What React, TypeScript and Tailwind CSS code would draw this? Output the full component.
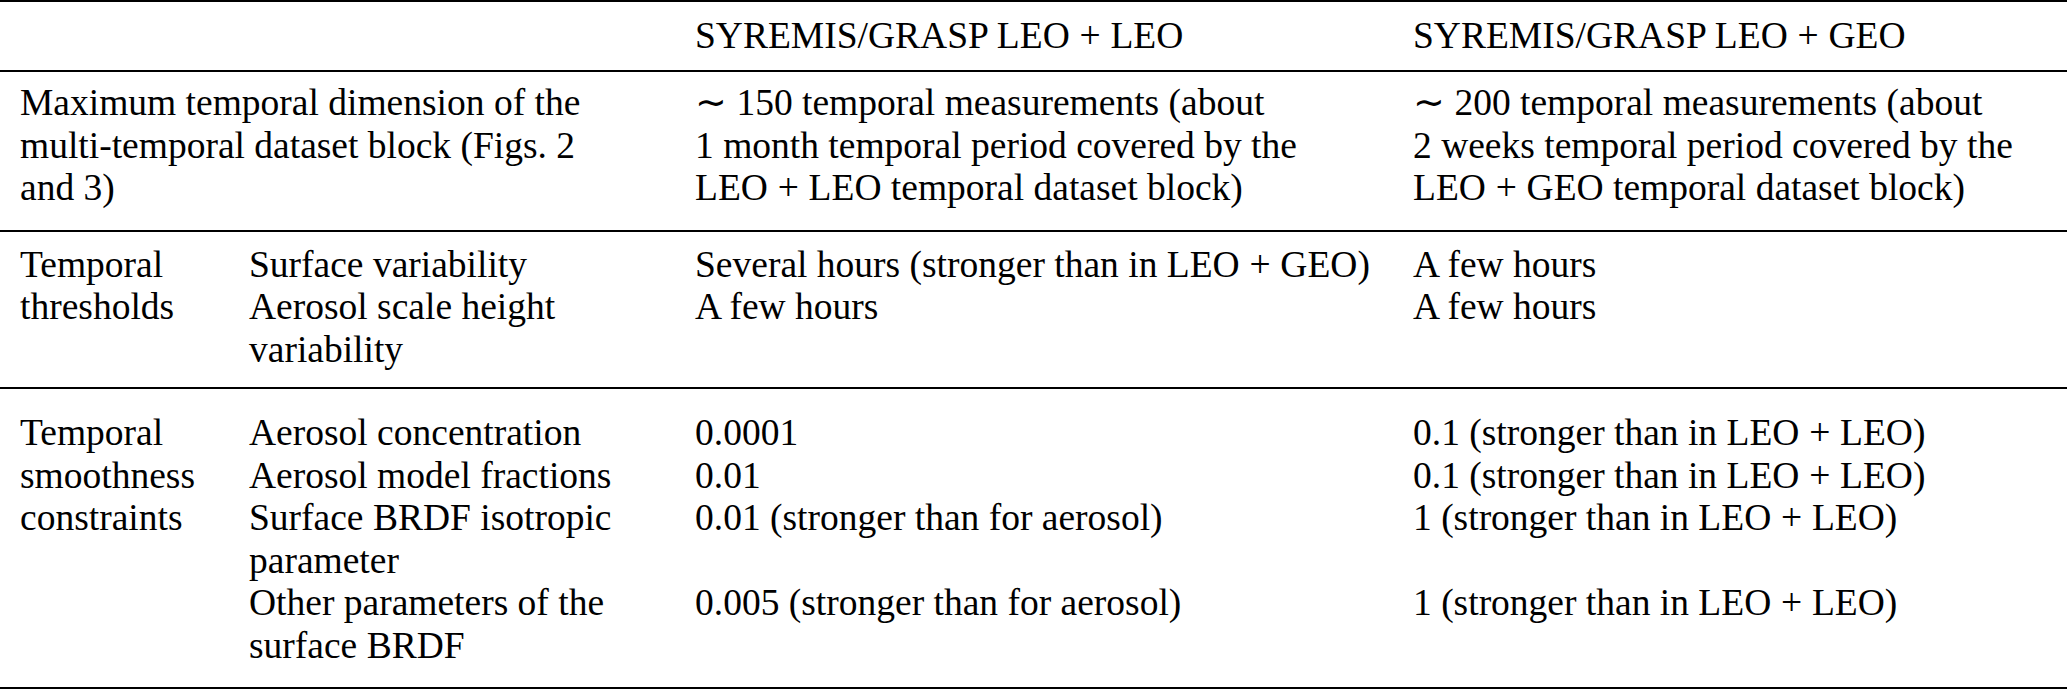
import React from "react"

const Plus = () => <span className="mx-[0.26em]">+</span>

const L = ({ lines }: { lines: React.ReactNode[] }) => (
  <>
    {lines.map((l, i) => (
      <div key={i} className="whitespace-nowrap">
        {l}
      </div>
    ))}
  </>
)

export default function App() {
  return (
    <div className="h-[690px] w-[2067px] bg-white font-['Liberation_Serif',serif] text-[37.5px] leading-[42.5px] text-black">
      <table className="w-full table-fixed border-collapse border-t-2 border-black">
        <colgroup>
          <col className="w-[249px]" />
          <col className="w-[446px]" />
          <col className="w-[718px]" />
          <col />
        </colgroup>
        <tbody className="[&_td]:align-top">
          {/* header */}
          <tr className="border-b-2 border-black">
            <td colSpan={2} />
            <td className="pt-[13px] pb-[12.5px] whitespace-nowrap">
              SYREMIS/GRASP LEO<Plus />LEO
            </td>
            <td className="pt-[13px] pb-[12.5px] whitespace-nowrap">
              SYREMIS/GRASP LEO<Plus />GEO
            </td>
          </tr>

          {/* maximum temporal dimension */}
          <tr className="border-b-2 border-black">
            <td colSpan={2} className="pl-[20px] pt-[10px] pb-[20px]">
              <L lines={["Maximum temporal dimension of the", "multi-temporal dataset block (Figs. 2", "and 3)"]} />
            </td>
            <td className="pt-[10px] pb-[20px]">
              <L
                lines={[
                  "∼ 150 temporal measurements (about",
                  "1 month temporal period covered by the",
                  <>LEO<Plus />LEO temporal dataset block)</>,
                ]}
              />
            </td>
            <td className="pt-[10px] pb-[20px]">
              <L
                lines={[
                  "∼ 200 temporal measurements (about",
                  "2 weeks temporal period covered by the",
                  <>LEO<Plus />GEO temporal dataset block)</>,
                ]}
              />
            </td>
          </tr>

          {/* temporal thresholds */}
          <tr>
            <td rowSpan={2} className="pl-[20px] pt-[12px] pb-[16px]">
              <L lines={["Temporal", "thresholds"]} />
            </td>
            <td className="pt-[12px] whitespace-nowrap">Surface variability</td>
            <td className="pt-[12px] whitespace-nowrap">
              Several hours (stronger than in LEO<Plus />GEO)
            </td>
            <td className="pt-[12px] whitespace-nowrap">A few hours</td>
          </tr>
          <tr className="border-b-2 border-black">
            <td className="pb-[16px]">
              <L lines={["Aerosol scale height", "variability"]} />
            </td>
            <td className="pb-[16px] whitespace-nowrap">A few hours</td>
            <td className="pb-[16px] whitespace-nowrap">A few hours</td>
          </tr>

          {/* temporal smoothness constraints */}
          <tr>
            <td rowSpan={4} className="pl-[20px] pt-[23px] pb-[20px]">
              <L lines={["Temporal", "smoothness", "constraints"]} />
            </td>
            <td className="pt-[23px] whitespace-nowrap">Aerosol concentration</td>
            <td className="pt-[23px] whitespace-nowrap">0.0001</td>
            <td className="pt-[23px] whitespace-nowrap">
              0.1 (stronger than in LEO<Plus />LEO)
            </td>
          </tr>
          <tr>
            <td className="whitespace-nowrap">Aerosol model fractions</td>
            <td className="whitespace-nowrap">0.01</td>
            <td className="whitespace-nowrap">
              0.1 (stronger than in LEO<Plus />LEO)
            </td>
          </tr>
          <tr>
            <td>
              <L lines={["Surface BRDF isotropic", "parameter"]} />
            </td>
            <td className="whitespace-nowrap">0.01 (stronger than for aerosol)</td>
            <td className="whitespace-nowrap">
              1 (stronger than in LEO<Plus />LEO)
            </td>
          </tr>
          <tr className="border-b-2 border-black">
            <td className="pb-[20px]">
              <L lines={["Other parameters of the", "surface BRDF"]} />
            </td>
            <td className="pb-[20px] whitespace-nowrap">0.005 (stronger than for aerosol)</td>
            <td className="pb-[20px] whitespace-nowrap">
              1 (stronger than in LEO<Plus />LEO)
            </td>
          </tr>
        </tbody>
      </table>
    </div>
  )
}
